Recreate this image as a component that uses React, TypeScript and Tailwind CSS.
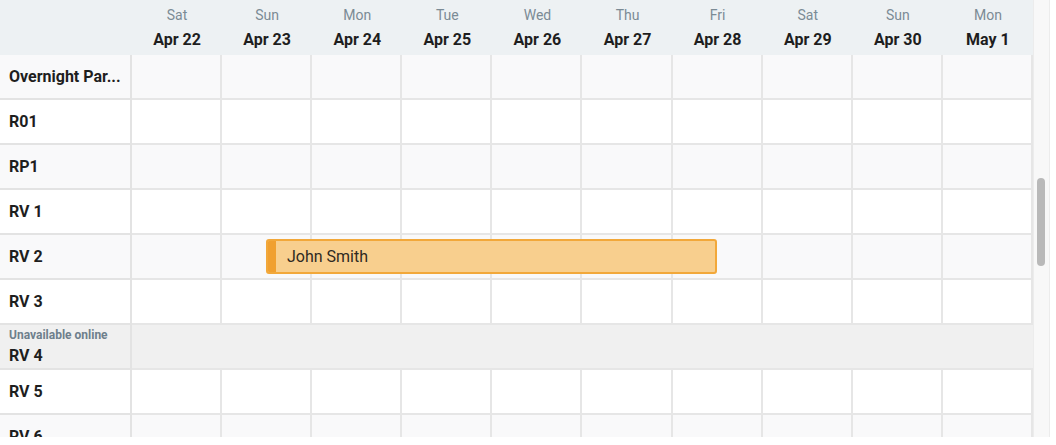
import React from "react";

const days = [
  ["Sat", "Apr 22"],
  ["Sun", "Apr 23"],
  ["Mon", "Apr 24"],
  ["Tue", "Apr 25"],
  ["Wed", "Apr 26"],
  ["Thu", "Apr 27"],
  ["Fri", "Apr 28"],
  ["Sat", "Apr 29"],
  ["Sun", "Apr 30"],
  ["Mon", "May 1"],
];

const rows = [
  { name: "Overnight Par...", alt: true },
  { name: "R01", alt: false },
  { name: "RP1", alt: true },
  { name: "RV 1", alt: false },
  { name: "RV 2", alt: true, booking: true },
  { name: "RV 3", alt: false },
  { name: "RV 4", alt: false, unavailable: true },
  { name: "RV 5", alt: false },
  { name: "RV 6", alt: true },
];

export default function App() {
  return (
    <div
      className="w-[1056px] h-[445px] bg-white overflow-hidden flex"
      style={{ fontFamily: "Roboto, 'Liberation Sans', sans-serif" }}
    >
      <div className="w-[1033px] h-[437px] overflow-hidden flex flex-col">
        {/* header */}
        <div className="h-[55px] shrink-0 bg-[#edf1f3] grid grid-cols-[132px_repeat(10,1fr)]">
          <div />
          {days.map(([d, date], i) => (
            <div key={i} className="flex flex-col items-center pt-[6px]">
              <span className="text-[14px] leading-[18px] text-[#7b8b95]">{d}</span>
              <span className="text-[16px] leading-[22px] font-bold text-[#1e1e1e] mt-[5px]">{date}</span>
            </div>
          ))}
        </div>
        {rows.map((r, ri) => (
          <div
            key={ri}
            className="h-[45px] shrink-0 grid grid-cols-[132px_repeat(10,1fr)] relative"
          >
            <div
              className={`border-r-2 border-b-2 border-[#e3e3e3] pl-[9px] flex flex-col ${
                r.unavailable ? "bg-[#f0f0f0] justify-start pt-[2px]" : "justify-center"
              } ${r.unavailable ? "" : r.alt ? "bg-[#f9f9fa]" : "bg-white"}`}
            >
              {r.unavailable && (
                <span className="text-[12px] leading-[16px] font-bold text-[#6e7f8c]">
                  Unavailable online
                </span>
              )}
              <span
                className={`text-[16px] leading-[20px] font-bold text-[#1e1e1e] ${
                  r.unavailable ? "mt-[3px]" : ""
                }`}
              >
                {r.name}
              </span>
            </div>
            {r.unavailable ? (
              <div className="col-span-10 bg-[#f0f0f0] border-b-2 border-[#e6e6e6]" />
            ) : (
              days.map((_, ci) => (
                <div
                  key={ci}
                  className={`border-r-2 border-b-2 border-[#e6e6e6] ${r.alt ? "bg-[#f9f9fa]" : "bg-white"}`}
                />
              ))
            )}
            {r.booking && (
              <div className="absolute left-[266px] top-[4px] w-[451px] h-[35px] rounded-[3px] border-2 border-[#f2a83a] bg-[#f8cf8e] flex items-center overflow-hidden">
                <div className="w-[8px] h-full bg-[#f0a030] shrink-0" />
                <span className="ml-[11px] text-[16px] text-[#2f2a22]">John Smith</span>
              </div>
            )}
          </div>
        ))}
      </div>
      <div className="w-[17px] h-[437px] bg-[#f8f8f8] border-l border-r border-[#ececec] relative">
        <div className="absolute left-[3px] top-[178px] w-[8px] h-[88px] rounded-full bg-[#b9b9b9]" />
      </div>
    </div>
  );
}
